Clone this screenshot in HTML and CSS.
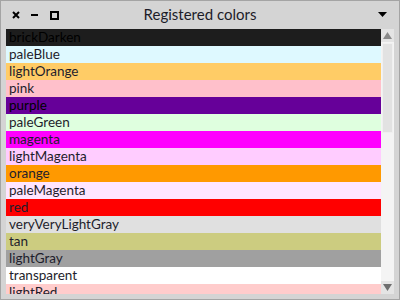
FILE: index.html
```html
<!DOCTYPE html>
<html>
<head>
<meta charset="utf-8">
<link rel="stylesheet" href="styles.css">
</head>
<body>
<div class="window">
  <div class="titlebar">
    <div class="controls">
      <svg class="ctl" width="8" height="8" viewBox="0 0 8 8"><path d="M1 1L7 7M7 1L1 7" stroke="#000" stroke-width="2"/></svg>
      <svg class="ctl" width="8" height="8" viewBox="0 0 8 8"><path d="M0 4H7" stroke="#000" stroke-width="2"/></svg>
      <svg class="ctl" width="9" height="9" viewBox="0 0 9 9"><rect x="1" y="1" width="7" height="7" fill="none" stroke="#000" stroke-width="2"/></svg>
    </div>
    <div class="title">Registered colors</div>
    <svg class="menu" width="9" height="6" viewBox="0 0 9 6"><path d="M0 0H9L4.5 5Z" fill="#000"/></svg>
  </div>
  <div class="body">
    <div class="list">
      <div class="row c-brickDarken">brickDarken</div>
      <div class="row c-paleBlue">paleBlue</div>
      <div class="row c-lightOrange">lightOrange</div>
      <div class="row c-pink">pink</div>
      <div class="row c-purple">purple</div>
      <div class="row c-paleGreen">paleGreen</div>
      <div class="row c-magenta">magenta</div>
      <div class="row c-lightMagenta">lightMagenta</div>
      <div class="row c-orange">orange</div>
      <div class="row c-paleMagenta">paleMagenta</div>
      <div class="row c-red">red</div>
      <div class="row c-veryVeryLightGray">veryVeryLightGray</div>
      <div class="row c-tan">tan</div>
      <div class="row c-lightGray">lightGray</div>
      <div class="row c-transparent">transparent</div>
      <div class="row c-lightRed">lightRed</div>
    </div>
    <div class="scrollbar">
      <div class="sbtn"><svg width="9" height="7" viewBox="0 0 9 7"><path d="M4.5 0L9 7H0Z" fill="#8a8a8a"/></svg></div>
      <div class="track"><div class="thumb"></div></div>
      <div class="sbtn"><svg width="9" height="7" viewBox="0 0 9 7"><path d="M0 0H9L4.5 7Z" fill="#6e6e6e"/></svg></div>
    </div>
  </div>
</div>
</body>
</html>
```
FILE: styles.css
```css
html, body {
  margin: 0;
  padding: 0;
}
body {
  width: 400px;
  height: 300px;
  overflow: hidden;
  font-family: Lato, "Noto Sans", sans-serif;
}
.window {
  box-sizing: border-box;
  width: 400px;
  height: 300px;
  background: #d4d4d4;
  border: 1px solid #a4a4a4;
  display: flex;
  flex-direction: column;
}
.titlebar {
  height: 28px;
  display: flex;
  align-items: center;
  position: relative;
  flex: none;
}
.controls {
  display: flex;
  align-items: center;
  gap: 9px;
  padding-left: 11px;
}
.ctl:nth-child(2) { margin-left: 2px; }
.ctl:nth-child(3) { margin-left: 2px; }
.title {
  position: absolute;
  left: 0;
  right: 0;
  top: 4px;
  text-align: center;
  font-size: 15px;
  color: #1c1c28;
}
.menu {
  margin-left: auto;
  margin-right: 12px;
}
.body {
  flex: 1;
  display: flex;
  margin: 0 5px 5px 5px;
  min-height: 0;
}
.list {
  flex: 1;
  overflow: hidden;
}
.row {
  height: 17px;
  line-height: 17px;
  padding-left: 3px;
  font-size: 13.5px;
  color: #1e1e2c;
}
.c-brickDarken { background: #1d1d1d; color: #000; }
.c-paleBlue { background: #def9ff; }
.c-lightOrange { background: #ffcc66; }
.c-pink { background: #ffc0cb; }
.c-purple { background: #660099; color: #000; }
.c-paleGreen { background: #dfffdf; }
.c-magenta { background: #ff00ff; }
.c-lightMagenta { background: #ffccff; }
.c-orange { background: #ff9900; }
.c-paleMagenta { background: #ffe5ff; }
.c-red { background: #ff0000; }
.c-veryVeryLightGray { background: #e0e0e0; }
.c-tan { background: #cccc80; }
.c-lightGray { background: #a0a0a0; }
.c-transparent { background: #ffffff; }
.c-lightRed { background: #ffcccc; }
.scrollbar {
  width: 13px;
  display: flex;
  flex-direction: column;
  background: #f4f4f4;
}
.sbtn {
  height: 13px;
  flex: none;
  background: #e4e4e4;
  display: flex;
  align-items: center;
  justify-content: center;
}
.track {
  flex: 1;
  padding: 1px 1px 0 1px;
}
.thumb {
  height: 90px;
  background: #e2e2e2;
  border: 1px solid #f0f0f0;
  box-sizing: border-box;
}
```
